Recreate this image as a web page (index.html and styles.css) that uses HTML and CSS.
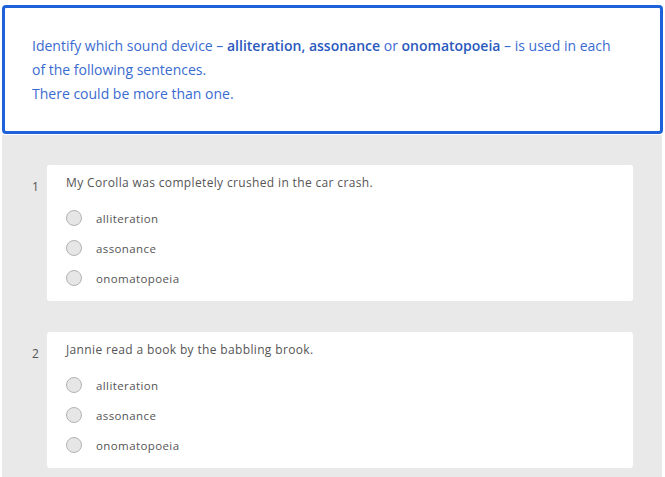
FILE: index.html
```html
<!DOCTYPE html>
<html>
<head>
<meta charset="utf-8">
<link rel="stylesheet" href="styles.css">
</head>
<body>
<div class="intro">
  <p>Identify which sound device – <b>alliteration, assonance</b> or <b>onomatopoeia</b> – is used in each of the following sentences.</p>
  <p>There could be more than one.</p>
</div>
<div class="questions">
  <div class="question">
    <div class="num">1</div>
    <div class="card">
      <div class="qtext">My Corolla was completely crushed in the car crash.</div>
      <div class="options">
        <div class="opt"><span class="radio"></span><span class="label">alliteration</span></div>
        <div class="opt"><span class="radio"></span><span class="label">assonance</span></div>
        <div class="opt"><span class="radio"></span><span class="label">onomatopoeia</span></div>
      </div>
    </div>
  </div>
  <div class="question">
    <div class="num">2</div>
    <div class="card">
      <div class="qtext">Jannie read a book by the babbling brook.</div>
      <div class="options">
        <div class="opt"><span class="radio"></span><span class="label">alliteration</span></div>
        <div class="opt"><span class="radio"></span><span class="label">assonance</span></div>
        <div class="opt"><span class="radio"></span><span class="label">onomatopoeia</span></div>
      </div>
    </div>
  </div>
</div>
</body>
</html>
```
FILE: styles.css
```css
html, body {
  margin: 0;
  padding: 0;
  background: #ffffff;
}
body {
  font-family: "Open Sans", "Liberation Sans", sans-serif;
  overflow: hidden;
  height: 477px;
}
.intro {
  margin: 5px 2px 0 2px;
  border: 3px solid #1d62d8;
  border-radius: 4px;
  padding: 26px 34px 25px 27px;
  color: #3a6bd0;
  font-family: "Open Sans", "Noto Sans", sans-serif;
  font-size: 14px;
  line-height: 24px;
}
.intro p {
  margin: 0;
}
.intro b {
  color: #2a58bd;
  font-weight: 600;
}
.questions {
  margin: 1px 3px 0 2px;
  background: #e9e9e9;
  padding: 30px 29px 20px 0;
  display: flex;
  flex-direction: column;
  gap: 31px;
}
.question {
  display: flex;
  align-items: flex-start;
}
.num {
  width: 45px;
  box-sizing: border-box;
  padding-left: 30px;
  padding-top: 14px;
  font-size: 12px;
  color: #555;
  line-height: 16px;
}
.card {
  flex: 1;
  background: #fff;
  border-radius: 3px;
  padding: 10px 19px 8px 19px;
  color: #555;
}
.qtext {
  font-size: 12px;
  letter-spacing: 0.35px;
  line-height: 16px;
}
.options {
  margin-top: 12px;
  display: flex;
  flex-direction: column;
}
.opt {
  display: flex;
  align-items: center;
  height: 30px;
}
.radio {
  width: 14px;
  height: 14px;
  border: 1px solid #b3b3b3;
  border-radius: 50%;
  background: #e6e6e6;
  flex: none;
}
.label {
  margin-left: 14px;
  font-size: 11.5px;
  letter-spacing: 0.4px;
  color: #555;
}
```
